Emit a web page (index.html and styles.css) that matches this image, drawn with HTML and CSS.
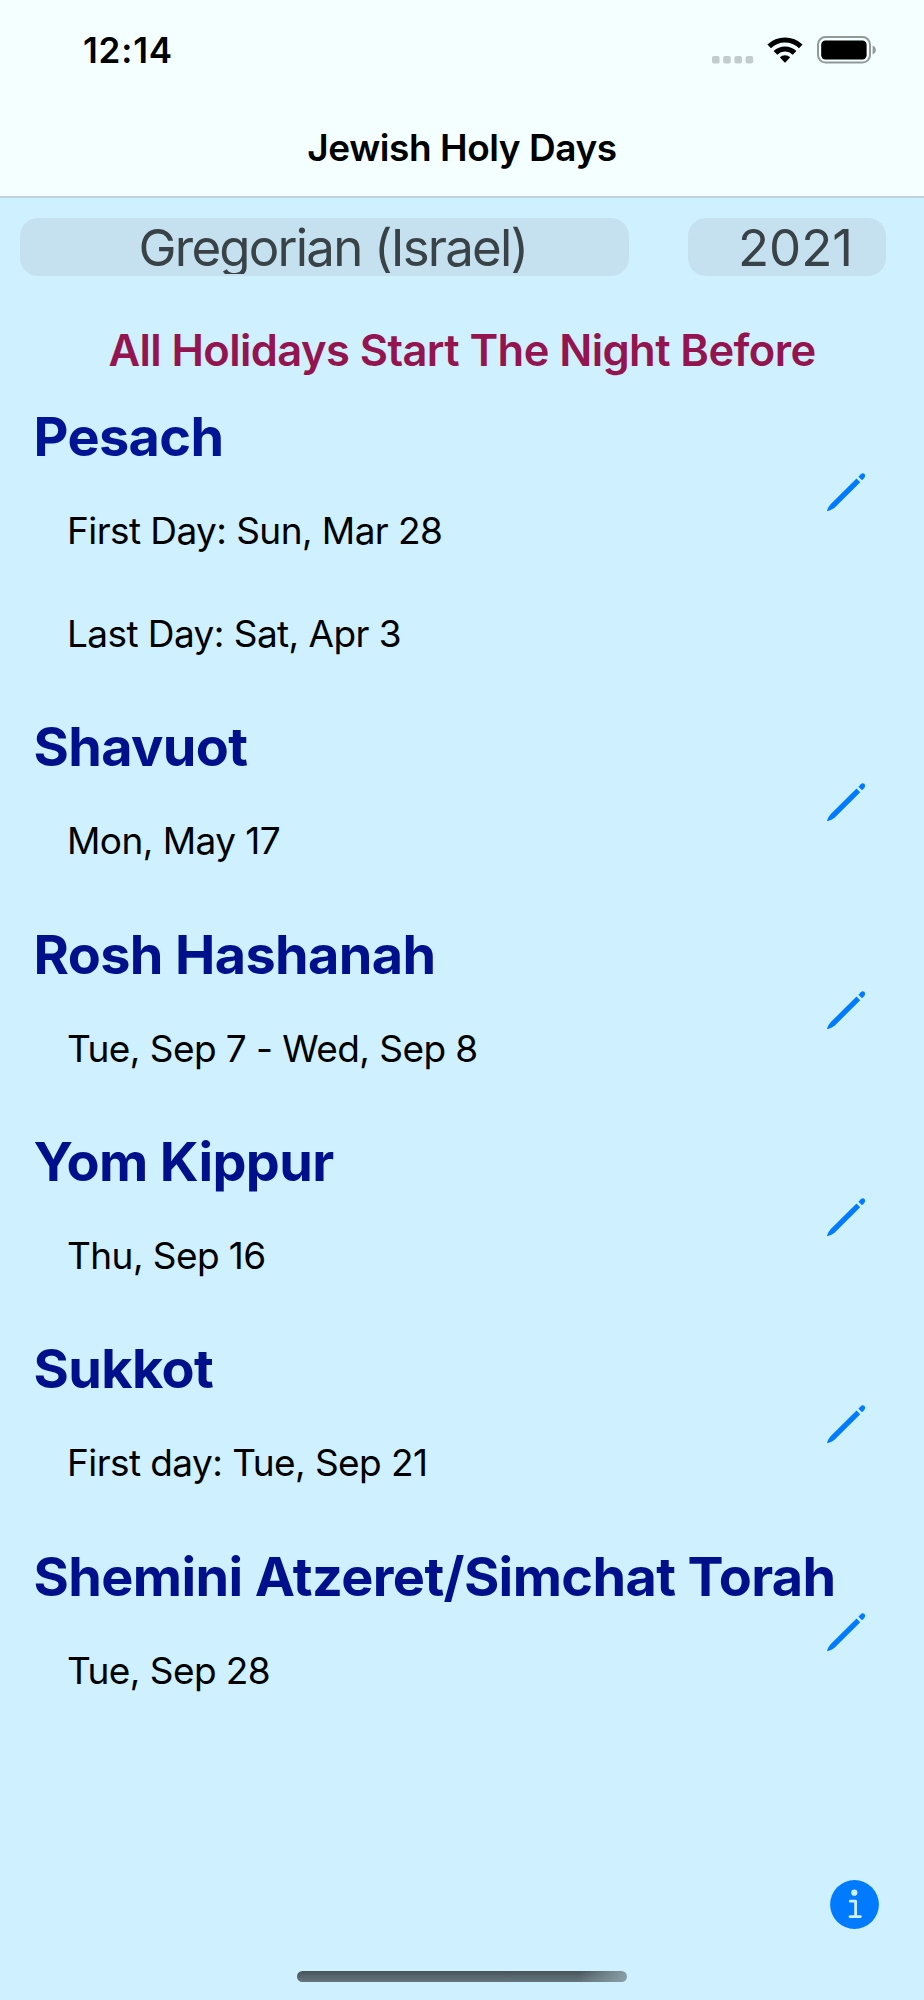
FILE: index.html
```html
<!doctype html>
<html>
    <head>
        <meta charset="utf-8">
        <title>Jewish Holy Days</title>
        <link rel="stylesheet" href="styles.css">
    </head>
    <body>
        <div class="header">
            <div class="statusBar">
                <div class="time">12:14</div>
                <div class="statusIcons">
                    <svg class="dots" width="42" height="8" viewBox="0 0 42 8">
                        <rect x="0" y="0" width="7.6" height="7.6" rx="2"/>
                        <rect x="11.2" y="0" width="7.6" height="7.6" rx="2"/>
                        <rect x="22.4" y="0" width="7.6" height="7.6" rx="2"/>
                        <rect x="33.6" y="0" width="7.6" height="7.6" rx="2"/>
                    </svg>
                    <svg class="wifi" width="36" height="27" viewBox="0 0 36 27">
                        <path d="M0.4 7.6 A25.4 25.4 0 0 1 35.6 7.6 L32 11.3 A20.1 20.1 0 0 0 4 11.3 Z"/>
                        <path d="M6.6 14 A16.4 16.4 0 0 1 29.4 14 L25.7 17.7 A11.1 11.1 0 0 0 10.3 17.7 Z"/>
                        <path d="M12.8 20.3 A7.6 7.6 0 0 1 23.2 20.3 L18.6 25.2 Q18 25.8 17.4 25.2 Z"/>
                    </svg>
                    <svg class="battery" width="60" height="28" viewBox="0 0 60 28">
                        <rect class="shell" x="1" y="1" width="52" height="25.6" rx="7.5"/>
                        <rect x="4.2" y="4.4" width="45.4" height="19" rx="4.2"/>
                        <path class="cap" d="M55.6 9.6 Q58.8 11 58.8 14 Q58.8 17 55.6 18.4 Z"/>
                    </svg>
                </div>
            </div>
            <div class="title">Jewish Holy Days</div>
        </div>

        <div class="pickers">
            <div class="picker calendar"><span>Gregorian (Israel)</span></div>
            <div class="picker year"><span>2021</span></div>
        </div>

        <div class="notice">All Holidays Start The Night Before</div>

        <div class="holidays">
            <div class="holiday first">
                <div class="info">
                    <h2>Pesach</h2>
                    <p>First Day: Sun, Mar 28</p>
                    <p>Last Day: Sat, Apr 3</p>
                </div>
                <svg class="pencil" viewBox="0 0 40 40"><use href="#pencil"/></svg>
            </div>
            <div class="holiday">
                <div class="info">
                    <h2>Shavuot</h2>
                    <p>Mon, May 17</p>
                </div>
                <svg class="pencil" viewBox="0 0 40 40"><use href="#pencil"/></svg>
            </div>
            <div class="holiday">
                <div class="info">
                    <h2>Rosh Hashanah</h2>
                    <p>Tue, Sep 7 - Wed, Sep 8</p>
                </div>
                <svg class="pencil" viewBox="0 0 40 40"><use href="#pencil"/></svg>
            </div>
            <div class="holiday">
                <div class="info">
                    <h2>Yom Kippur</h2>
                    <p>Thu, Sep 16</p>
                </div>
                <svg class="pencil" viewBox="0 0 40 40"><use href="#pencil"/></svg>
            </div>
            <div class="holiday">
                <div class="info">
                    <h2>Sukkot</h2>
                    <p>First day: Tue, Sep 21</p>
                </div>
                <svg class="pencil" viewBox="0 0 40 40"><use href="#pencil"/></svg>
            </div>
            <div class="holiday">
                <div class="info">
                    <h2>Shemini Atzeret/Simchat Torah</h2>
                    <p>Tue, Sep 28</p>
                </div>
                <svg class="pencil" viewBox="0 0 40 40"><use href="#pencil"/></svg>
            </div>
        </div>

        <div class="footer">
            <svg class="infoButton" width="49" height="49" viewBox="0 0 49 49">
                <circle class="disc" cx="24.5" cy="24.5" r="24.4"/>
                <circle class="dot" cx="24.3" cy="12.7" r="3.1"/>
                <path class="stem" d="M20.2 21.2 H25.6 V36.5 M20 36.7 H30.4"/>
            </svg>
            <div class="homeBar"></div>
        </div>

        <svg class="symbols" width="0" height="0">
            <symbol id="pencil" viewBox="0 0 40 40">
                <path d="M30.5 6.6 L34.2 10.3 L8.6 35.7 Q5.6 37.8 2 39.1 Q0.9 39.3 1.1 38.2 Q2.4 34.8 4.8 32.1 Z"/>
                <path d="M32.4 4.8 L34.8 2.2 Q36.8 0.4 38.5 2.1 Q40 3.9 38.4 5.9 L36 8.3 Z"/>
            </symbol>
        </svg>
    </body>
</html>
```

FILE: styles.css
```css
body
{
    margin: 0;
    height: 2000px;
    display: flex;
    flex-direction: column;
    background-color: #cef0ff;
    font-family: Inter, "Liberation Sans", sans-serif;
    color: #000;
}
.header
{
    height: 196px;
    background-color: #f4ffff;
    border-bottom: 2px solid #bfd3da;
}
.statusBar
{
    height: 100px;
    display: flex;
    justify-content: space-between;
    padding: 0 47px 0 83px;
}
.time
{
    font-size: 35px;
    font-weight: 600;
    line-height: 101px;
    letter-spacing: 0.8px;
}
.statusIcons
{
    display: flex;
    align-items: flex-start;
}
.dots
{
    margin: 56px 13px 0 0;
    fill: #c3cccc;
}
.wifi
{
    margin: 37px 14px 0 0;
}
.battery
{
    margin-top: 36px;
}
.shell
{
    fill: none;
    stroke: #929999;
    stroke-width: 2;
}
.cap
{
    fill: #929999;
}
.title
{
    font-size: 37px;
    font-weight: 600;
    line-height: 95px;
    letter-spacing: -0.45px;
    text-align: center;
}
.pickers
{
    display: flex;
    justify-content: space-between;
    padding: 20px 38px 0 20px;
}
.picker
{
    box-sizing: border-box;
    height: 58px;
    padding-left: 17px;
    border-radius: 18px;
    background-color: #c5e1ef;
    color: #394246;
    font-size: 51px;
    line-height: 59px;
    text-align: center;
}
.calendar
{
    width: 609px;
    letter-spacing: -1.8px;
}
.calendar span
{
    display: block;
    height: 56px;
    overflow: hidden;
}
.year
{
    width: 198px;
}
.notice
{
    margin-top: 44px;
    font-size: 43.5px;
    font-weight: 600;
    line-height: 60px;
    letter-spacing: -0.58px;
    text-align: center;
    color: #94144f;
}
.holidays
{
    padding: 14.6px 58px 0 33px;
}
.holiday
{
    display: flex;
    margin-bottom: 19.7px;
}
.info
{
    flex: 1;
    min-width: 0;
    white-space: nowrap;
}
.info h2
{
    margin: 0;
    padding-left: 0.5px;
    font-size: 54px;
    line-height: 84px;
    letter-spacing: -0.62px;
    color: #00108a;
}
.first h2
{
    color: #001494;
}
.info p
{
    margin: 0;
    padding-left: 34px;
    font-size: 37px;
    line-height: 103.6px;
    letter-spacing: -0.58px;
}
.pencil
{
    width: 40px;
    height: 40px;
    margin-top: 77px;
    fill: #007aff;
}
.footer
{
    margin-top: auto;
    display: flex;
    flex-direction: column;
}
.infoButton
{
    align-self: flex-end;
    margin-right: 45px;
}
.disc
{
    fill: #007aff;
}
.dot
{
    fill: #cef0ff;
}
.stem
{
    fill: none;
    stroke: #cef0ff;
    stroke-width: 2.8;
    stroke-linecap: round;
    stroke-linejoin: round;
}
.homeBar
{
    align-self: center;
    width: 330px;
    height: 11px;
    margin: 42px 0 18px;
    border-radius: 6px;
    background: linear-gradient(100deg, transparent 85%, #8aa0a8 100%), linear-gradient(#48545a, #65767d);
}
.symbols
{
    position: absolute;
}
```
